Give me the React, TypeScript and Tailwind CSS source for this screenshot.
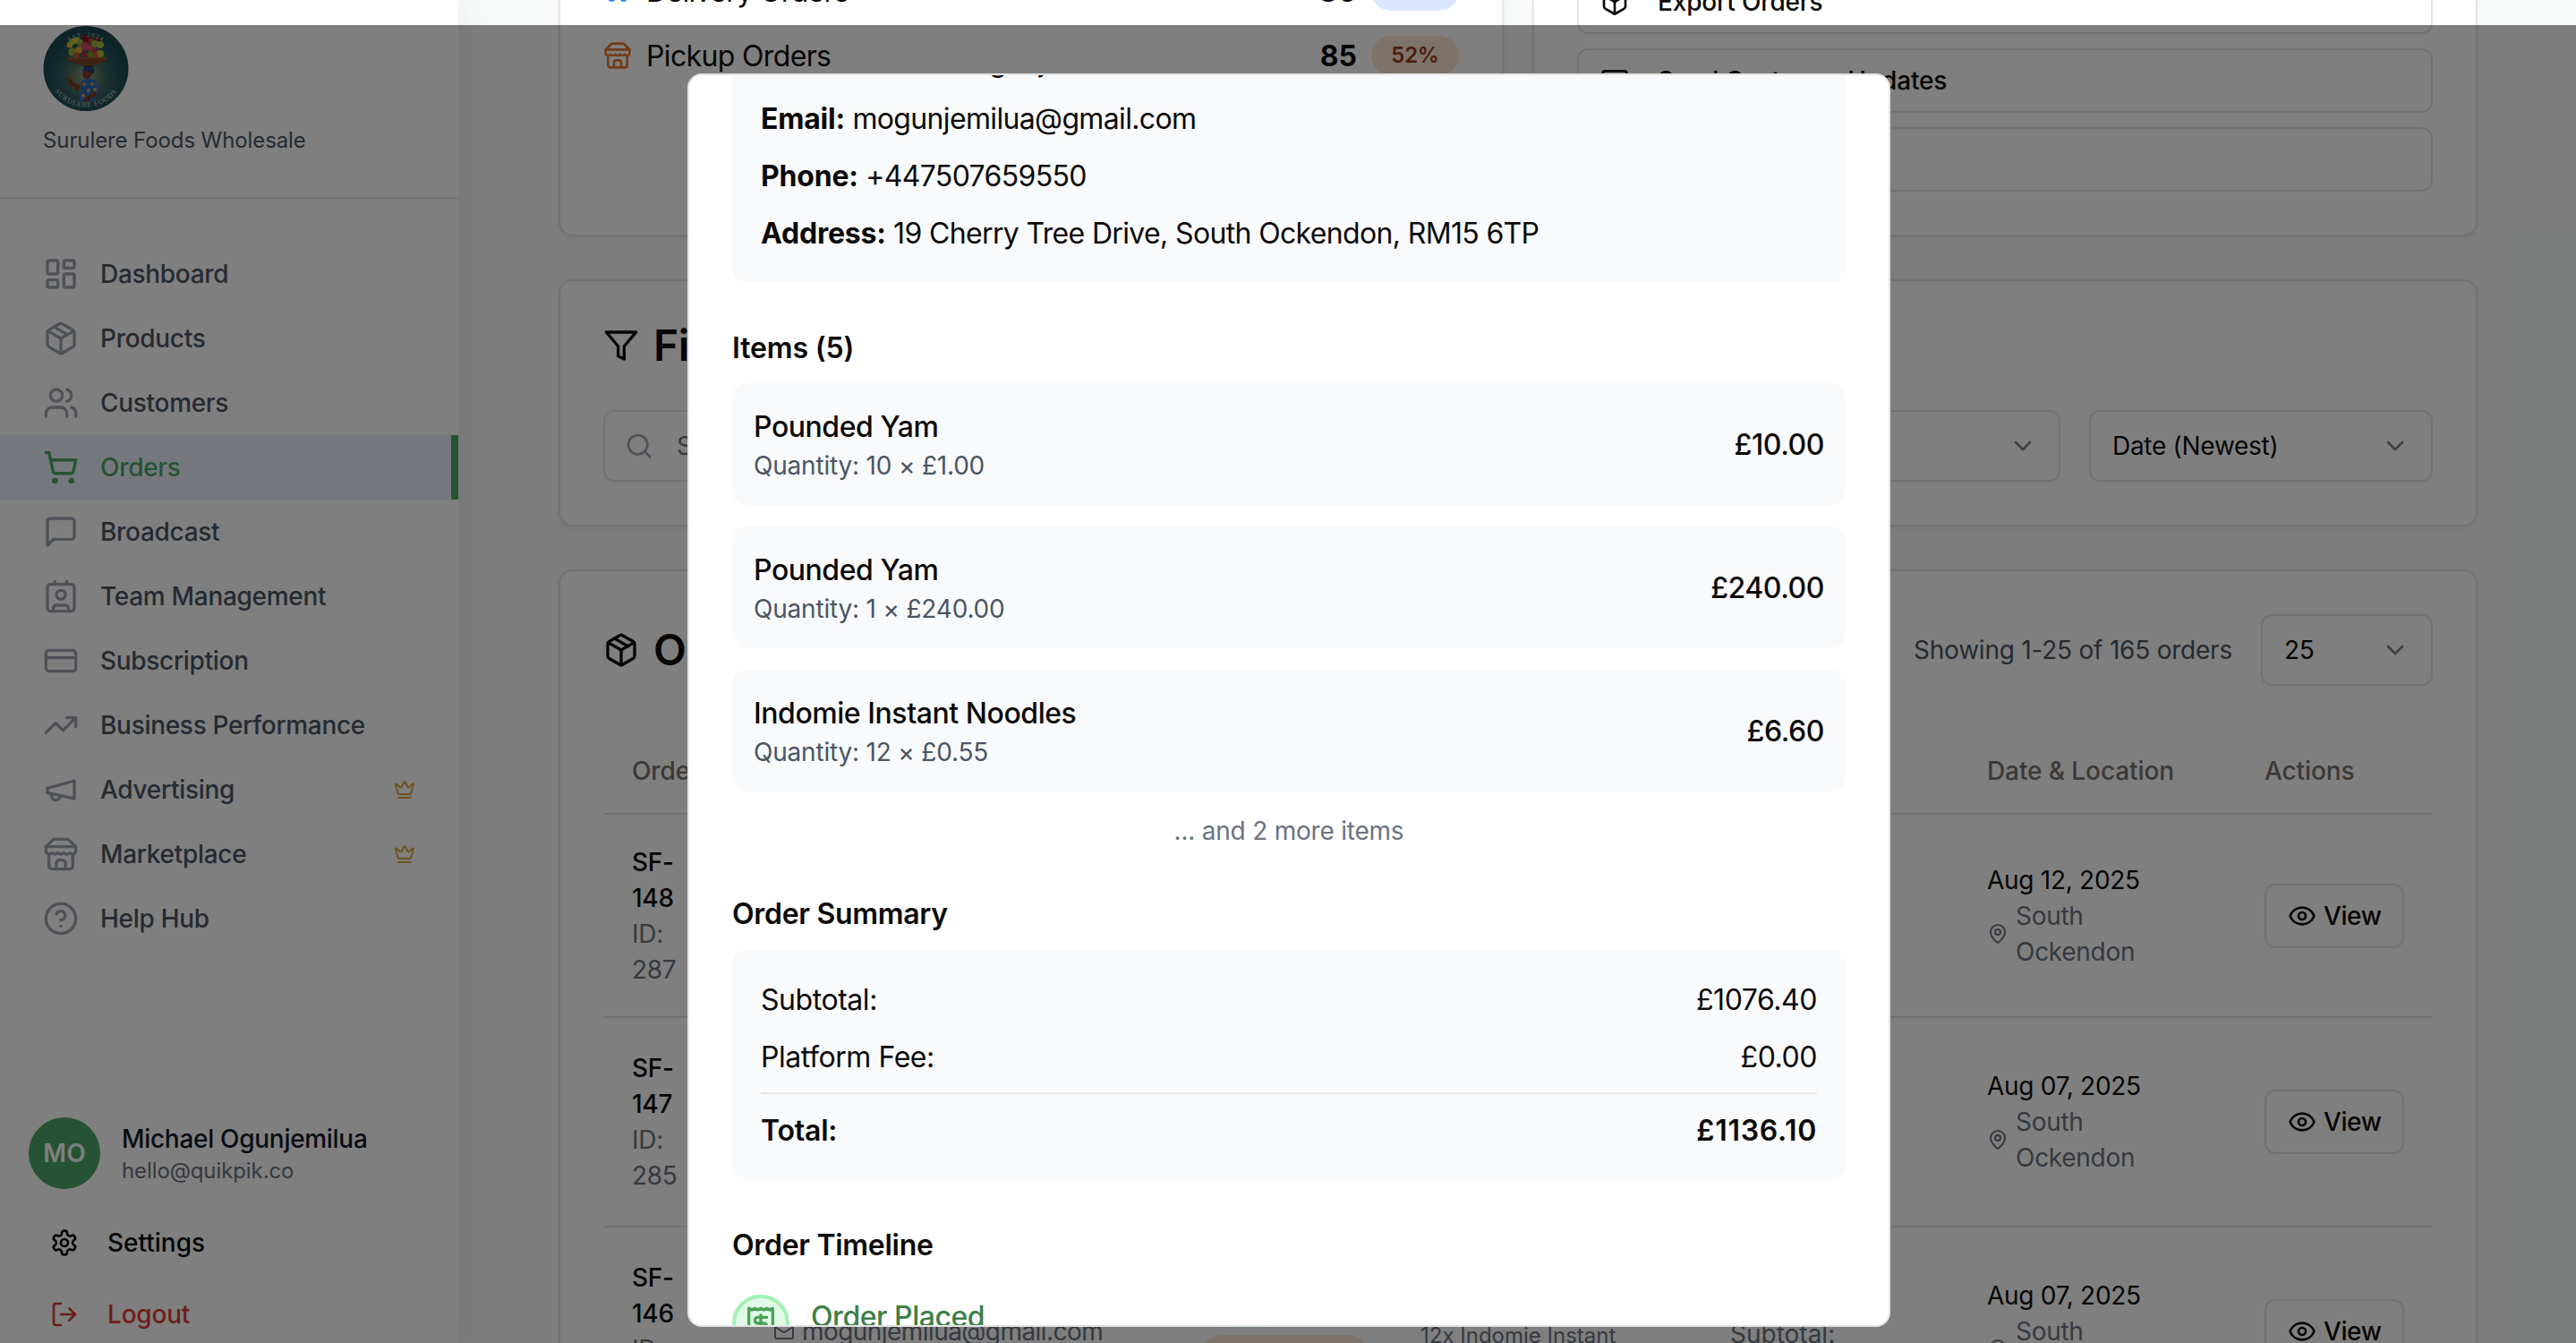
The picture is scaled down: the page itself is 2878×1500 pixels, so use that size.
import React from "react";
import {
  ChevronDown,
  CircleQuestionMark,
  Contact,
  CreditCard,
  Crown,
  Eye,
  LayoutDashboard,
  LogOut,
  Mail,
  MapPin,
  Package,
  Search,
  ShoppingCart,
  TrendingUp,
  Truck,
  Users,
} from "lucide-react";

type IconProps = { className?: string };

function Stroke({ className, children }: IconProps & { children: React.ReactNode }) {
  return (
    <svg
      viewBox="0 0 24 24"
      fill="none"
      stroke="currentColor"
      strokeWidth="2"
      strokeLinecap="round"
      strokeLinejoin="round"
      className={className}
    >
      {children}
    </svg>
  );
}

const Store = ({ className }: IconProps) => (
  <Stroke className={className}>
    <path d="m2 7 4.41-4.41A2 2 0 0 1 7.83 2h8.34a2 2 0 0 1 1.42.59L22 7" />
    <path d="M4 12v8a2 2 0 0 0 2 2h12a2 2 0 0 0 2-2v-8" />
    <path d="M15 22v-4a2 2 0 0 0-2-2h-2a2 2 0 0 0-2 2v4" />
    <path d="M2 7h20" />
    <path d="M22 7v3a2 2 0 0 1-2 2a2.7 2.7 0 0 1-1.59-.63.7.7 0 0 0-.82 0A2.7 2.7 0 0 1 16 12a2.7 2.7 0 0 1-1.59-.63.7.7 0 0 0-.82 0A2.7 2.7 0 0 1 12 12a2.7 2.7 0 0 1-1.59-.63.7.7 0 0 0-.82 0A2.7 2.7 0 0 1 8 12a2.7 2.7 0 0 1-1.59-.63.7.7 0 0 0-.82 0A2.7 2.7 0 0 1 4 12a2 2 0 0 1-2-2V7" />
  </Stroke>
);

const Message = ({ className }: IconProps) => (
  <Stroke className={className}>
    <path d="M21 15a2 2 0 0 1-2 2H7l-4 4V5a2 2 0 0 1 2-2h14a2 2 0 0 1 2 2z" />
  </Stroke>
);

const Megaphone = ({ className }: IconProps) => (
  <Stroke className={className}>
    <path d="m3 11 18-5v12L3 14v-3z" />
    <path d="M11.6 16.8a3 3 0 1 1-5.8-1.6" />
  </Stroke>
);

const Filter = ({ className }: IconProps) => (
  <Stroke className={className}>
    <polygon points="22 3 2 3 10 12.46 10 19 14 21 14 12.46 22 3" />
  </Stroke>
);

const Receipt = ({ className }: IconProps) => (
  <Stroke className={className}>
    <path d="M4 2v20l2-1 2 1 2-1 2 1 2-1 2 1 2-1 2 1V2l-2 1-2-1-2 1-2-1-2 1-2-1-2 1Z" />
    <path d="M16 8h-6a2 2 0 1 0 0 4h4a2 2 0 1 1 0 4H8" />
    <path d="M12 17.5v-11" />
  </Stroke>
);

const Gear = ({ className }: IconProps) => (
  <Stroke className={className}>
    <path d="M12.22 2h-.44a2 2 0 0 0-2 2v.18a2 2 0 0 1-1 1.73l-.43.25a2 2 0 0 1-2 0l-.15-.08a2 2 0 0 0-2.73.73l-.22.38a2 2 0 0 0 .73 2.73l.15.1a2 2 0 0 1 1 1.72v.51a2 2 0 0 1-1 1.74l-.15.09a2 2 0 0 0-.73 2.73l.22.38a2 2 0 0 0 2.73.73l.15-.08a2 2 0 0 1 2 0l.43.25a2 2 0 0 1 1 1.73V20a2 2 0 0 0 2 2h.44a2 2 0 0 0 2-2v-.18a2 2 0 0 1 1-1.73l.43-.25a2 2 0 0 1 2 0l.15.08a2 2 0 0 0 2.73-.73l.22-.39a2 2 0 0 0-.73-2.73l-.15-.08a2 2 0 0 1-1-1.74v-.5a2 2 0 0 1 1-1.74l.15-.09a2 2 0 0 0 .73-2.73l-.22-.38a2 2 0 0 0-2.73-.73l-.15.08a2 2 0 0 1-2 0l-.43-.25a2 2 0 0 1-1-1.73V4a2 2 0 0 0-2-2z" />
    <circle cx="12" cy="12" r="3" />
  </Stroke>
);

const FRUIT: [number, number, number, string][] = [
  [30, 22, 3.5, "#c9b92c"],
  [34, 18, 3.5, "#b9c83a"],
  [38, 17, 3.5, "#d8c53a"],
  [42, 20, 4, "#8fae38"],
  [48, 15, 4.5, "#7a1426"],
  [54, 18, 3.5, "#b3402a"],
  [61, 17, 3, "#8c1b24"],
  [58, 21, 4, "#93b43c"],
  [64, 22, 4, "#a8bc3c"],
  [47, 24, 5, "#c94a5a"],
  [53, 26, 3.5, "#c75060"],
  [33, 30, 4.5, "#97ad3a"],
  [40, 28, 4, "#d8a032"],
  [58, 29, 4, "#b23a48"],
  [64, 32, 4, "#b9b82c"],
  [46, 33, 3.5, "#a8323e"],
  [53, 33, 3.5, "#6f9838"],
  [59, 34, 3, "#c0563a"],
  [37, 34, 3.5, "#c4523c"],
];

function Logo() {
  return (
    <svg viewBox="0 0 96 96" className="size-24">
      <defs>
        <radialGradient id="glow" cx="50%" cy="60%" r="48%">
          <stop offset="0" stopColor="#8f9f80" />
          <stop offset="0.45" stopColor="#40685f" />
          <stop offset="0.8" stopColor="#22505a" />
          <stop offset="1" stopColor="#1d474e" />
        </radialGradient>
        <path id="arcTop" d="M13 48a35 35 0 0 1 70 0" />
        <path id="arcBottom" d="M4.500 48a43.500 43.500 0 0 0 87 0" />
      </defs>
      <circle cx="48" cy="48.500" r="47.500" fill="url(#glow)" />
      {FRUIT.map(([cx, cy, r, fill], i) => (
        <circle key={i} cx={cx} cy={cy} r={r} fill={fill} />
      ))}
      <path d="M28 36h43c0 5-8 9-21 9s-22-4-22-9z" fill="#7a4226" />
      <path d="M28 36h43v2.500H28z" fill="#94552f" />
      <path d="M45 45h12l-2 4h-8z" fill="#4c3320" />
      <ellipse cx="51" cy="51" rx="6.500" ry="4.500" fill="#1f3f8c" />
      <path d="M46 51c-3 3-2 8 2 9h4l4-7z" fill="#7c3a24" />
      <path d="M42 68l-8-4-5-6-3 1 3 7 10 8z" fill="#7c3a24" />
      <path d="M28 59l6-2 2-2" stroke="#9c5a30" strokeWidth="1.500" fill="none" />
      <path d="M42 64c4-5 13-6 18 0l1 9-2 4v8H42l-2-4 3-8z" fill="#2d68b8" />
      <path d="M60 75l-2 5-13 7 1-4 9-8z" fill="#7c3a24" />
      {[[46, 66], [55, 66], [51, 73], [45, 79], [58, 72]].map(([x, y]) => (
        <circle key={x + "-" + y} cx={x} cy={y} r="2" fill="#d89a3c" />
      ))}
      <text fill="#b9cfca" fontSize="7" letterSpacing="1.2" className="font-['Liberation_Serif',serif]">
        <textPath href="#arcTop" startOffset="50%" textAnchor="middle">
          EST. 2024
        </textPath>
      </text>
      <text fill="#b9cfca" fontSize="8" letterSpacing="0.8" className="font-['Liberation_Serif',serif]">
        <textPath href="#arcBottom" startOffset="50%" textAnchor="middle">
          SURULERE FOODS
        </textPath>
      </text>
    </svg>
  );
}

const NAV: { label: string; icon: React.ComponentType<IconProps>; active?: boolean; premium?: boolean }[] = [
  { label: "Dashboard", icon: LayoutDashboard },
  { label: "Products", icon: Package },
  { label: "Customers", icon: Users },
  { label: "Orders", icon: ShoppingCart, active: true },
  { label: "Broadcast", icon: Message },
  { label: "Team Management", icon: Contact },
  { label: "Subscription", icon: CreditCard },
  { label: "Business Performance", icon: TrendingUp },
  { label: "Advertising", icon: Megaphone, premium: true },
  { label: "Marketplace", icon: Store, premium: true },
  { label: "Help Hub", icon: CircleQuestionMark },
];

function Sidebar() {
  return (
    <aside className="z-10 flex h-full w-[512px] shrink-0 flex-col bg-white shadow-[0_0_30px_rgba(0,0,0,0.08)]">
      <div className="flex h-[222px] shrink-0 flex-col border-b-2 border-[#e5e7eb] px-12 pt-7">
        <Logo />
        <p className="mt-4 text-2xl leading-[34px] tracking-[-0.1px] text-[#4b5563]">Surulere Foods Wholesale</p>
      </div>
      <nav className="flex flex-col pt-12">
        {NAV.map(({ label, icon: Icon, active, premium }) => (
          <div
            key={label}
            className={
              active
                ? "flex h-[72px] items-center gap-6 border-r-8 border-[#4ba666] bg-[#e9f1fb] pr-10 pl-12 text-[#4ba666]"
                : "flex h-[72px] items-center gap-6 px-12 text-[#4b5563]"
            }
          >
            <Icon className={active ? "size-10 text-[#4ba666]" : "size-10 text-[#9ca3af]"} />
            <span className="flex-1 text-[28px] leading-10 font-medium tracking-[-0.3px]">{label}</span>
            {premium && <Crown className="size-6 text-[#dda63a]" />}
          </div>
        ))}
      </nav>
      <div className="mt-[186px] flex items-center gap-6 px-8">
        <div className="flex size-20 items-center justify-center rounded-full bg-[#4ba666] text-[28px] font-semibold text-white">
          MO
        </div>
        <div>
          <p className="text-[28px] leading-10 font-medium tracking-[-0.3px] text-[#111827]">Michael Ogunjemilua</p>
          <p className="text-2xl leading-8 tracking-[-0.1px] text-[#6b7280]">hello@quikpik.co</p>
        </div>
      </div>
      <div className="mt-6 flex h-[72px] shrink-0 items-center gap-8 px-14 text-[#0c0a09]">
        <Gear className="size-8" />
        <span className="text-[28px] leading-10 font-medium">Settings</span>
      </div>
      <div className="mt-2 flex h-[72px] shrink-0 items-center gap-8 px-14 text-[#d93a35]">
        <LogOut className="size-8" />
        <span className="text-[28px] leading-10 font-medium tracking-[-0.2px]">Logout</span>
      </div>
    </aside>
  );
}

function StatRow(props: { icon: React.ReactNode; label: string; count: string; percent: string; badge: string }) {
  return (
    <div className="flex h-12 shrink-0 items-center">
      {props.icon}
      <span className="ml-4 flex-1 pt-0.5 text-[32px] leading-[46px] tracking-[-0.65px]">{props.label}</span>
      <span className="pt-0.5 text-[32px] leading-[46px] font-bold">{props.count}</span>
      <span className={props.badge}>{props.percent}</span>
    </div>
  );
}

function ActionButton({ icon, label }: { icon?: React.ReactNode; label?: string }) {
  return (
    <div className="flex h-[72px] shrink-0 items-center gap-8 rounded-xl border-2 border-[#e7e5e4] px-6 text-[28px] leading-10 font-medium tracking-[-0.15px]">
      {icon}
      {label}
    </div>
  );
}

function Select({ className, label }: { className: string; label: string }) {
  return (
    <div className={className}>
      <span className="text-[28px] leading-10 tracking-[-0.28px]">{label}</span>
      <ChevronDown className="size-8 opacity-50" />
    </div>
  );
}

const ORDERS = [
  { number: "148", id: "287", date: "Aug 12, 2025", height: "h-[227px]", details: false },
  { number: "147", id: "285", date: "Aug 07, 2025", height: "h-[234px]", details: false },
  { number: "146", id: "284", date: "Aug 07, 2025", height: "h-[234px]", details: true },
];

const COLUMNS = "grid grid-cols-[158px_479px_244px_346px_287px_310px_220px] border-b-2 border-[#e7e5e4]";

function OrdersTable() {
  return (
    <div className="mt-12 text-[28px] leading-10 tracking-[-0.28px]">
      <div className={COLUMNS + " h-24 items-center font-medium tracking-[-0.1px] text-[#78716c]"}>
        <span className="px-8">Order</span>
        <span className="col-start-6 px-8">Date &amp; Location</span>
        <span className="px-8">Actions</span>
      </div>
      {ORDERS.map((o) => (
        <div key={o.number} className={COLUMNS + " items-center " + o.height}>
          <div className="w-[120px] pl-8">
            <p className="font-medium">SF- {o.number}</p>
            <p className="w-14 text-[#6b7280]">ID: {o.id}</p>
          </div>
          {o.details && (
            <>
              <div className="flex items-center gap-2 px-8 tracking-[-0.56px] text-[#6b7280]">
                <Mail className="size-6" />
                mogunjemilua@gmail.com
              </div>
              <div className="flex flex-col gap-2 px-8">
                <span className="h-11 w-24 rounded-full bg-[#dcfce7]" />
                <span className="h-11 w-[186px] rounded-full bg-[#fde6d3]" />
              </div>
              <div className="self-start px-8 pt-[105px] text-2xl leading-8 tracking-normal text-[#6b7280]">
                12x Indomie Instant
              </div>
              <div className="self-start px-8 pt-[99px] tracking-normal text-[#6b7280]">Subtotal:</div>
            </>
          )}
          <div className="col-start-6 px-8">
            <p>{o.date}</p>
            <div className="flex items-center gap-2 text-[#6b7280]">
              <MapPin className="size-6 shrink-0" />
              <span className="w-36">South Ockendon</span>
            </div>
          </div>
          <div className="px-8">
            <div className="flex h-[72px] w-[156px] items-center gap-2 rounded-xl border-2 border-[#e7e5e4] pl-6 font-medium tracking-[-0.4px]">
              <Eye className="size-8" />
              View
            </div>
          </div>
        </div>
      ))}
    </div>
  );
}

const CARD = "border-2 border-[#e7e5e4] bg-white px-12 shadow-[0_2px_4px_rgba(0,0,0,0.06)]";

function Content() {
  return (
    <main className="flex flex-1 flex-col gap-12 pr-[110px] pl-28">
      <div className="grid h-[264px] shrink-0 grid-cols-2 gap-8">
        <section className={CARD + " overflow-hidden rounded-b-2xl border-t-0"}>
          <div className="-mt-[34px] flex flex-col gap-6">
            <StatRow
              icon={<Truck className="size-8 text-[#3b82f6]" />}
              label="Delivery Orders"
              count="80"
              percent="48%"
              badge="ml-4 flex h-11 w-[98px] items-center justify-center rounded-full bg-[#dbe7fc] text-2xl font-semibold text-[#1e40af]"
            />
            <StatRow
              icon={<Store className="size-8 text-[#e8762c]" />}
              label="Pickup Orders"
              count="85"
              percent="52%"
              badge="ml-4 flex h-11 w-[98px] items-center justify-center rounded-full bg-[#fbe6d0] text-2xl font-semibold tracking-[-0.3px] text-[#9a3a1c]"
            />
          </div>
        </section>
        <section className={CARD + " flex flex-col justify-end gap-4 overflow-hidden rounded-b-2xl border-t-0 pb-12"}>
          <ActionButton icon={<Package className="size-8" />} label="Export Orders" />
          <ActionButton icon={<Mail className="size-8" />} label="Send Customer Updates" />
          <ActionButton />
        </section>
      </div>

      <section className={CARD + " h-[276px] shrink-0 rounded-2xl py-12"}>
        <h2 className="flex h-12 items-center gap-4 text-5xl leading-none font-semibold tracking-[-0.5px]">
          <Filter className="size-10" />
          Filters
        </h2>
        <div className="mt-12 flex h-20 gap-8">
          <div className="flex flex-1 items-center gap-[26px] rounded-xl border-2 border-[#e7e5e4] px-[22px] text-[28px] leading-10 text-[#78716c]">
            <Search className="size-8 text-[#9ca3af]" />
            Search orders...
          </div>
          <Select
            className="flex w-96 items-center justify-between rounded-xl border-2 border-[#e7e5e4] px-6"
            label="All Orders"
          />
          <Select
            className="flex w-96 items-center justify-between rounded-xl border-2 border-[#e7e5e4] px-6"
            label="Date (Newest)"
          />
        </div>
      </section>

      <section className={CARD + " h-[1100px] shrink-0 rounded-2xl py-12"}>
        <div className="flex h-20 items-center justify-between">
          <h2 className="flex items-center gap-4 text-5xl leading-none font-semibold tracking-[-0.5px]">
            <Package className="size-10" />
            Orders
          </h2>
          <div className="flex items-center gap-8">
            <span className="text-[28px] leading-10 tracking-[-0.22px] text-[#4b5563]">
              Showing 1-25 of 165 orders
            </span>
            <Select
              className="flex h-20 w-48 items-center justify-between rounded-xl border-2 border-[#e7e5e4] px-6"
              label="25"
            />
          </div>
        </div>
        <OrdersTable />
      </section>
    </main>
  );
}

const ITEMS = [
  { name: "Pounded Yam", quantity: "Quantity: 10 × £1.00", price: "£10.00" },
  { name: "Pounded Yam", quantity: "Quantity: 1 × £240.00", price: "£240.00" },
  { name: "Indomie Instant Noodles", quantity: "Quantity: 12 × £0.55", price: "£6.60" },
];

const CUSTOMER = [
  ["Name:", "Michael Ogunjemilua"],
  ["Email:", "mogunjemilua@gmail.com"],
  ["Phone:", "+447507659550"],
  ["Address:", "19 Cherry Tree Drive, South Ockendon, RM15 6TP"],
];

function OrderDialog() {
  return (
    <div className="absolute top-[82px] left-[768px] flex h-[1400px] w-[1344px] flex-col overflow-hidden rounded-2xl border-2 border-[#e5e5e4] bg-white px-12 text-[32px] leading-[46px] tracking-[-0.65px] text-[#0c0a09]">
      <div className="-mt-10 flex shrink-0 flex-col gap-4 rounded-2xl bg-[#f9fafc] px-8 pb-8">
        {CUSTOMER.map(([label, value]) => (
          <p key={label} className="pt-0.5">
            <strong className="font-bold tracking-[-0.2px]">{label}</strong> {value}
          </p>
        ))}
      </div>

      <h3 className="mt-12 pt-0.5 font-semibold tracking-[-0.15px]">Items (5)</h3>
      <div className="mt-4 flex flex-col gap-6">
        {ITEMS.map((item) => (
          <div key={item.quantity} className="flex items-center justify-between rounded-2xl bg-[#f9fafc] p-6">
            <div>
              <p className="pt-0.5 font-medium tracking-[-0.45px]">{item.name}</p>
              <p className="text-[28px] leading-10 tracking-[-0.2px] text-[#4b5563]">{item.quantity}</p>
            </div>
            <span className="pt-0.5 font-medium tracking-[-0.45px]">{item.price}</span>
          </div>
        ))}
        <p className="text-center text-[28px] leading-10 tracking-[-0.22px] text-[#6b7280]">... and 2 more items</p>
      </div>

      <h3 className="mt-12 pt-0.5 font-semibold tracking-[-0.3px]">Order Summary</h3>
      <div className="mt-4 flex flex-col gap-4 rounded-2xl bg-[#f9fafc] p-8">
        <div className="flex justify-between pt-0.5 tracking-[-0.45px]">
          <span>Subtotal:</span>
          <span>£1076.40</span>
        </div>
        <div className="flex justify-between pt-0.5 tracking-[-0.45px]">
          <span>Platform Fee:</span>
          <span>£0.00</span>
        </div>
        <div className="flex justify-between border-t-2 border-[#e7e5e4] pt-[18px] font-semibold tracking-[-0.2px]">
          <span>Total:</span>
          <span className="tracking-[0.7px]">£1136.10</span>
        </div>
      </div>

      <h3 className="mt-12 pt-0.5 font-semibold tracking-[-0.3px]">Order Timeline</h3>
      <div className="mt-8 flex gap-6">
        <div className="flex size-16 items-center justify-center rounded-full border-4 border-[#a2f0b5] bg-[#e1fae7] text-[#4ba158]">
          <Receipt className="size-10" />
        </div>
        <span className="pt-0.5 font-medium tracking-[-0.45px] text-[#3c8046]">Order Placed</span>
      </div>
    </div>
  );
}

export default function App() {
  return (
    <div className="relative flex h-[1500px] w-[2878px] overflow-hidden bg-[#f8faf9] font-['Inter',sans-serif] text-[#0c0a09]">
      <Sidebar />
      <Content />
      <div className="absolute inset-x-0 top-7 bottom-0 z-20 bg-black/50" />
      <div className="absolute inset-0 z-30">
        <OrderDialog />
      </div>
    </div>
  );
}
